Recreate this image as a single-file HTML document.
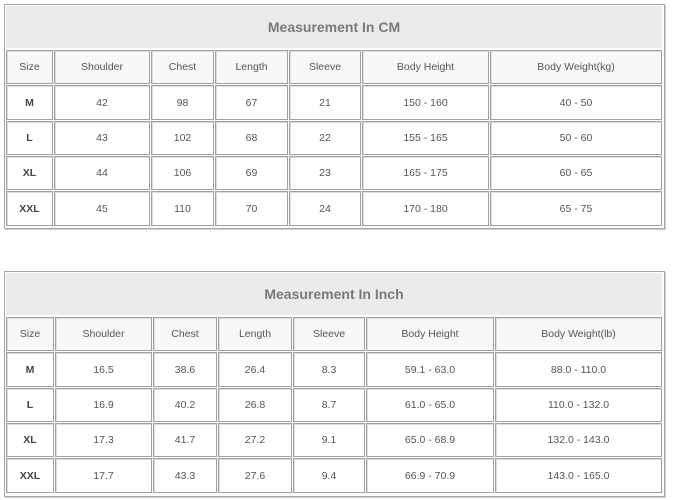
<!DOCTYPE html>
<html><head><style>
body{margin:0;width:673px;height:500px;background:#fff;position:relative;overflow:hidden;font-family:"Liberation Sans",Arial,sans-serif}
.o{position:absolute;left:4px;width:661px;border:1px solid #a8a8a8;box-sizing:border-box;box-shadow:1px 1px 0 #d0d0d0}
.c{position:absolute;box-sizing:border-box;border:1px solid #a0a0a0;display:flex;align-items:center;justify-content:center;font-size:10.5px;color:#555;background:#fff;box-shadow:inset 1px 1px 0 #ddd}
.t{background:#ebebeb;border:none;box-shadow:none;font-size:14px;font-weight:bold;color:#7a7a7a}
.h{background:#f8f8f8}
.b{font-weight:bold;color:#444}
</style></head><body>
<div class="o" style="top:4px;height:225px"></div>
<div class="o" style="top:271px;height:226px"></div>
<div id="root"></div>
<script>
function build(cols,title,rows,tTop,rowsPos){
 var h='';
 h+='<div class="c t" style="left:6px;top:'+tTop+'px;width:656px;height:42px">'+title+'</div>';
 rows.forEach(function(r,ri){
  var p=rowsPos[ri];
  r.forEach(function(v,ci){
   var cl='c'+(ri==0?' h':'')+(ci==0&&ri>0?' b':'');
   h+='<div class="'+cl+'" style="left:'+cols[ci][0]+'px;width:'+cols[ci][1]+'px;top:'+p[0]+'px;height:'+p[1]+'px">'+v+'</div>';
  });
 });
 return h;
}
var c1=[[6,47],[54,96],[151,63],[215,73],[289,72],[362,127],[490,172]];
var c2=[[6,48],[55,97],[153,64],[218,74],[293,72],[366,128],[495,167]];
var r1=[["Size","Shoulder","Chest","Length","Sleeve","Body Height","Body Weight(kg)"],["M","42","98","67","21","150 - 160","40 - 50"],["L","43","102","68","22","155 - 165","50 - 60"],["XL","44","106","69","23","165 - 175","60 - 65"],["XXL","45","110","70","24","170 - 180","65 - 75"]];
var r2=[["Size","Shoulder","Chest","Length","Sleeve","Body Height","Body Weight(lb)"],["M","16.5","38.6","26.4","8.3","59.1 - 63.0","88.0 - 110.0"],["L","16.9","40.2","26.8","8.7","61.0 - 65.0","110.0 - 132.0"],["XL","17.3","41.7","27.2","9.1","65.0 - 68.9","132.0 - 143.0"],["XXL","17.7","43.3","27.6","9.4","66.9 - 70.9","143.0 - 165.0"]];
document.getElementById('root').innerHTML=
 build(c1,"Measurement In CM",r1,6,[[50,34],[85,35],[121,34],[156,34],[191,35]])+
 build(c2,"Measurement In Inch",r2,273,[[317,34],[352,35],[388,34],[423,34],[458,35]]);
</script>
</body></html>
